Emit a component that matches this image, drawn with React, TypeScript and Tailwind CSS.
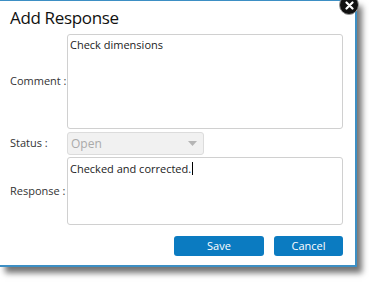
function Field({ label, children, className }: { label: string; children: React.ReactNode; className?: string }) {
  return (
    <div className={`flex items-center ${className ?? ''}`}>
      <span className="w-[57px] shrink-0 whitespace-nowrap text-[11px] text-[#333]">{label}</span>
      {children}
    </div>
  )
}

export default function App() {
  return (
    <div className="h-[283px] w-[369px] bg-white" style={{ fontFamily: '"Open Sans", sans-serif' }}>
      <div className="relative h-[267px] w-[357px] border-t border-r-2 border-b-2 border-[#3d8fc4] bg-white shadow-[5px_6px_6px_rgba(0,0,0,0.55)]">
        <button className="absolute -right-[4px] -top-[6px] flex h-[20px] w-[20px] items-center justify-center rounded-full border border-[#999] bg-[#111] text-white">
          <svg width="9" height="9" viewBox="0 0 9 9">
            <path d="M1.5 1.5L7.5 7.5M7.5 1.5L1.5 7.5" stroke="white" strokeWidth="2.2" strokeLinecap="round" />
          </svg>
        </button>

        <h1 className="pl-[10px] pt-[5px] text-[17px] leading-[24px] tracking-[-0.02em] text-[#111]">Add Response</h1>

        <div className="pl-[10px] pt-[4px]">
          <Field label="Comment :">
            <div className="h-[95px] w-[276px] rounded-[3px] border border-[#d0d0d0] px-[2px] pt-[2px] text-[11px] text-[#222]">
              Check dimensions
            </div>
          </Field>

          <Field label="Status :" className="mt-[3px]">
            <div className="flex h-[23px] w-[137px] items-center justify-between rounded-[3px] border border-[#dcdcdc] bg-[#f1f1f1] pl-[3px] pr-[6px] text-[12px] text-[#aaa]">
              <span>Open</span>
              <svg width="9" height="5" viewBox="0 0 9 5">
                <path d="M0 0H9L4.5 5Z" fill="#b5b5b5" />
              </svg>
            </div>
          </Field>

          <Field label="Response :" className="mt-[2px]">
            <div className="h-[68px] w-[276px] rounded-[3px] border border-[#d0d0d0] px-[2px] pt-[2px] text-[11px] text-[#222]">
              Checked and corrected.<span className="ml-[1px] inline-block h-[13px] w-px translate-y-[2px] bg-black" />
            </div>
          </Field>
        </div>

        <div className="mt-[11px] flex justify-end gap-[10px] pr-[12px]">
          <button className="h-[20px] w-[90px] rounded-[3px] bg-[#0b7bc1] text-[11px] text-white">Save</button>
          <button className="h-[20px] w-[69px] rounded-[3px] bg-[#0b7bc1] text-[11px] text-white">Cancel</button>
        </div>
      </div>
    </div>
  )
}
